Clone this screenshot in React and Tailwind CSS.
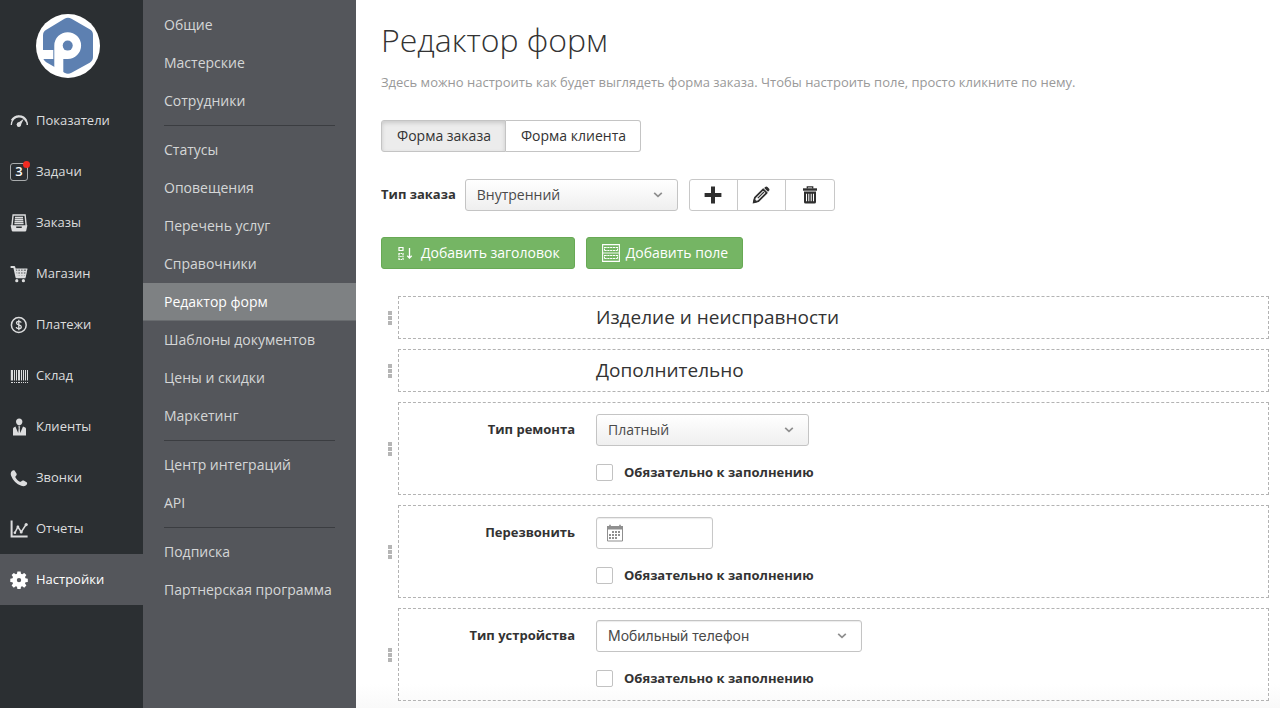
import React from "react";

const iconBox = "h-[18px] w-[18px] shrink-0";

function Gauge() {
  return (
    <svg viewBox="0 0 18 18" className={iconBox} fill="none" stroke="currentColor">
      <path d="M1.300 13C1.300 9 4 5 9 4.200" strokeWidth="1.300" />
      <path d="M1.800 8.500C3.400 5.600 6 4.300 9 4.300c3.600 0 6 1.800 7.300 4.700" strokeWidth="2.200" />
      <path d="M15.600 8c1.200 1.500 1.700 3.100 1.700 5" strokeWidth="1.500" />
      <path d="M13.800 6.800 10.800 13a2 2 0 1 1-3-1.900z" fill="currentColor" stroke="none" />
      <circle cx="8.900" cy="12.500" r="2.200" fill="currentColor" stroke="none" />
    </svg>
  );
}

function TaskCount() {
  return (
    <span className="relative flex h-[18px] w-[18px] shrink-0 items-center justify-center rounded-[3px] border border-[#a9acad] text-[13px] leading-none font-semibold text-white">
      3
      <span className="absolute -top-[3px] -right-[3px] h-[7px] w-[7px] rounded-full bg-[#f12b21]" />
    </span>
  );
}

function Tray() {
  return (
    <svg viewBox="0 0 18 18" className={iconBox} fill="none" stroke="currentColor">
      <path d="M1.900 12 3.100 1h12L16.200 12" strokeWidth="1.400" />
      <path d="M5 3.500h8M4.800 5.500h8.400M4.600 7.500h8.800M4.400 9.500h9.200" strokeWidth="1.300" />
      <path
        fill="currentColor"
        stroke="none"
        fillRule="evenodd"
        d="M.6 11.200h16.800l-1.200 5.600q-.2.800-1 .8H2.800q-.800 0-1-.8zM6.200 12.600v.8q0 .7.800.700h4q.8 0 .8-.7v-.8z"
      />
    </svg>
  );
}

function Cart() {
  return (
    <svg viewBox="0 0 18 18" className={iconBox} fill="none" stroke="currentColor">
      <path d="M.6 1.900h3.600l2.300 10.300h9" strokeWidth="2" strokeLinejoin="round" />
      <path d="M4.400 4h13l-1.800 8H6.300z" fill="currentColor" fillOpacity=".45" stroke="none" />
      <path d="M4.400 4h13M5 6.700h11.600M5.600 9.300h10.600M7.800 4v7M10.500 4v7M13.200 4v7M16.800 4l-1.500 7.500" strokeWidth="1.200" />
      <path d="M6 11.300h9.700" strokeWidth="1.800" />
      <circle cx="6.800" cy="15.700" r="1.600" fill="currentColor" stroke="none" />
      <circle cx="13.400" cy="15.700" r="1.600" fill="currentColor" stroke="none" />
    </svg>
  );
}

function Coin() {
  return (
    <svg viewBox="0 0 18 18" className={iconBox} fill="none" stroke="currentColor">
      <circle cx="8.800" cy="9" r="7.400" strokeWidth="1.500" />
      <path
        d="M11.200 6.700C11 5.700 10 5.300 8.800 5.300c-1.300 0-2.300.5-2.300 1.700C6.500 9.600 11.300 8.200 11.300 10.900c0 1.200-1.100 1.800-2.500 1.800-1.300 0-2.400-.5-2.600-1.700M8.800 3.800v10.400"
        strokeWidth="1.300"
      />
    </svg>
  );
}

function Barcode() {
  return (
    <svg viewBox="0 0 18 18" className={iconBox} fill="currentColor">
      <path d="M.8 3h2.200v10.500H.8zM4 3h1v10.500H4zM6 3h1v10.500H6zM8 3h2v10.500H8zM11 3h1v10.500h-1zM13 3h1v10.500h-1zM15 3h1v10.500h-1zM17 3h1v10.500h-1z" />
      <path d="M1 15h2v1H1zM4 15h1v1H4zM6 15h1v1H6zM8 15h2v1H8zM11 15h1v1h-1zM13 15h1v1h-1zM15 15h1v1h-1zM17 15h1v1h-1z" />
    </svg>
  );
}

function Client() {
  return (
    <svg viewBox="0 0 18 18" className={iconBox} fill="currentColor">
      <path d="M9.200.6c2 0 3.200 1.400 3.200 3.200S11 7.400 9.200 7.400 6 5.600 6 3.800 7.200.6 9.200.6z" />
      <path d="M5.400 8.600 8.200 15l.5-5L8.200 8.200h2L9.700 10l.5 5L13 8.600l2.200.9q.8.400.800 1.500v6.500H3V11q0-1.100.8-1.500z" />
    </svg>
  );
}

function Phone() {
  return (
    <svg viewBox="0 0 18 18" className={iconBox} fill="currentColor">
      <path d="M1.700 2.300C2.700 1.100 4.100.9 4.700 1.700l1.800 2.900c.5.900.2 1.700-.5 2.300-.7.500-.8.900-.5 1.500 1 1.900 2.500 3.400 4.400 4.300.6.300 1 .1 1.500-.5.600-.8 1.400-1 2.300-.6l2.900 1.700c.9.600.7 2-.5 2.900-1.400 1.100-3.100 1.200-4.900.6C6.500 15.200 3 11.600 1.200 7 .5 5.300.6 3.600 1.700 2.300z" />
    </svg>
  );
}

function Report() {
  return (
    <svg viewBox="0 0 18 18" className={iconBox} fill="none" stroke="currentColor">
      <path d="M1.600.6v15.800h16" strokeWidth="2" />
      <path d="M4.800 12.800 7.900 7l3.400 5 4.800-7.500" strokeWidth="1.500" />
      <g fill="currentColor" stroke="none">
        <circle cx="4.900" cy="12.700" r="1.300" />
        <circle cx="7.900" cy="6.900" r="1.400" />
        <circle cx="11.200" cy="12" r="1.500" />
        <circle cx="16.200" cy="4.600" r="1.600" />
      </g>
    </svg>
  );
}

function Gear() {
  return (
    <svg viewBox="0 0 18 18" className={iconBox} fill="currentColor">
      <path
        fillRule="evenodd"
        d="M7.400.5h3.200l.4 2.300 1.200.5 2-1.400 2.200 2.200-1.400 2 .5 1.200 2.300.4v3.200l-2.300.4-.5 1.200 1.400 2-2.200 2.200-2-1.400-1.200.5-.4 2.300H7.400L7 15.800l-1.200-.5-2 1.400-2.200-2.200 1.400-2-.5-1.200-2.200-.4V7.700l2.200-.4.5-1.200-1.400-2 2.200-2.200 2 1.400L7 2.800zM9 6.900a2.200 2.200 0 1 0 0 4.400 2.200 2.200 0 0 0 0-4.400z"
      />
    </svg>
  );
}

const sections = [
  ["Показатели", Gauge],
  ["Задачи", TaskCount],
  ["Заказы", Tray],
  ["Магазин", Cart],
  ["Платежи", Coin],
  ["Склад", Barcode],
  ["Клиенты", Client],
  ["Звонки", Phone],
  ["Отчеты", Report],
  ["Настройки", Gear],
];

const settings = [
  ["Общие", "Мастерские", "Сотрудники"],
  [
    "Статусы",
    "Оповещения",
    "Перечень услуг",
    "Справочники",
    "Редактор форм",
    "Шаблоны документов",
    "Цены и скидки",
    "Маркетинг",
  ],
  ["Центр интеграций", "API"],
  ["Подписка", "Партнерская программа"],
];

function Logo() {
  return (
    <svg viewBox="0 0 64 64" className="h-16 w-16" role="img" aria-label="Логотип">
      <circle cx="32" cy="32" r="32" fill="#fff" />
      <path
        fill="#5d80b1"
        d="M28.500 4.800q3.500-2 7 0l18.200 10.500q3.300 1.900 3.300 5.600v22.200q0 3.700-3.300 5.600L35.500 58.700q-3.500 2-7 0L10.300 48.200Q7 46.300 7 42.600V21.400q0-3.700 3.300-5.600z"
      />
      <path fill="#fff" d="M5 36h12.300v9H5z" />
      <path fill="#fff" d="M18.300 31.600a13.400 13.400 0 1 1 13.400 13.400h-4.400v14.500l-9-5z" />
      <circle cx="31.700" cy="31.600" r="5" fill="#5d80b1" />
    </svg>
  );
}

function Sidebar() {
  return (
    <nav className="flex w-[143px] shrink-0 flex-col bg-[#2b2f32]">
      <a href="#home" className="flex justify-center pt-3.5 pr-[7px] pb-[17px]">
        <Logo />
      </a>
      {sections.map(([label, Icon]) => (
        <a
          key={label}
          href="#section"
          className={
            label === "Настройки"
              ? "flex h-[51px] items-center gap-2 bg-[#54565b] pl-2.5 text-[13px] text-white"
              : "flex h-[51px] items-center gap-2 pl-2.5 text-[13px] text-[#dcddde]"
          }
        >
          <Icon />
          {label}
        </a>
      ))}
    </nav>
  );
}

function SettingsMenu() {
  return (
    <nav className="flex w-[213px] shrink-0 flex-col bg-[#54565b] pt-1.5 text-sm">
      {settings.map((group, i) => (
        <React.Fragment key={group[0]}>
          {i > 0 && <hr className="mx-[21px] my-[5px] border-[#3b3d41]" />}
          {group.map((label) => (
            <a
              key={label}
              href="#settings"
              className={
                label === "Редактор форм"
                  ? "flex h-[38px] items-center border-b border-[#696c6f] bg-[#7e8183] pl-[21px] text-white"
                  : "flex h-[38px] items-center pl-[21px] text-[#d5d6d7]"
              }
            >
              {label}
            </a>
          ))}
        </React.Fragment>
      ))}
    </nav>
  );
}

function Select({ id, value, width, plain }) {
  return (
    <div className={`relative ${width}`}>
      <select
        id={id}
        defaultValue={value}
        className={
          plain
            ? "h-8 w-full appearance-none rounded-[3px] border border-[#c4c4c4] bg-white pl-[11px] font-['Inter','Noto_Sans',sans-serif] text-sm text-[#4a4a4a] shadow-[inset_0_1px_1px_#00000014]"
            : "h-8 w-full appearance-none rounded-[3px] border border-[#c4c4c4] bg-linear-to-b from-white to-[#efefef] pl-[11px] text-sm text-[#4a4a4a]"
        }
      >
        <option>{value}</option>
      </select>
      <svg
        viewBox="0 0 10 6"
        className="pointer-events-none absolute top-[13px] right-[15px] h-[6px] w-[10px]"
        fill="none"
        stroke="#8f8f8f"
        strokeWidth="1.700"
      >
        <path d="M1.200.8 5 4.400 8.800.8" />
      </svg>
    </div>
  );
}

function Handle() {
  return (
    <span className="flex w-[17px] shrink-0 flex-col gap-px pl-[7px]" aria-hidden="true">
      <span className="h-[4px] w-[4px] bg-[#b5b5b5]" />
      <span className="h-[4px] w-[4px] bg-[#b5b5b5]" />
      <span className="h-[4px] w-[4px] bg-[#b5b5b5]" />
    </span>
  );
}

const dashed = "grow border border-dashed border-[#b3b3b3]";

function HeadingRow({ title }) {
  return (
    <li className="flex items-center">
      <Handle />
      <h2 className={`${dashed} flex h-[43px] items-center pl-[197px] text-[19px] text-[#333]`}>{title}</h2>
    </li>
  );
}

function FieldRow({ id, label, children }) {
  return (
    <li className="flex items-center">
      <Handle />
      <div className={`${dashed} flex h-[93px] gap-[21px] pt-[11px]`}>
        <label htmlFor={id} className="w-[176px] pt-[5px] text-right text-[13px] leading-5 font-bold text-[#333]">
          {label}
        </label>
        <div>
          {children}
          <label className="mt-4 flex items-center gap-[11px] text-[13px] leading-5 font-bold text-[#333]">
            <input
              type="checkbox"
              className="h-[17px] w-[17px] appearance-none rounded-xs border border-[#c2c2c2] bg-white"
            />
            Обязательно к заполнению
          </label>
        </div>
      </div>
    </li>
  );
}

function Toolbar() {
  const base = "flex h-8 w-12 items-center justify-center";
  return (
    <div className="ml-[11px] flex divide-x divide-[#c8c8c8] rounded-[3px] border border-[#c8c8c8] text-[#2f2f2f]">
      <button type="button" aria-label="Добавить тип" className={`${base} -my-px`}>
        <svg viewBox="0 0 18 18" className={iconBox} fill="currentColor">
          <path d="M7 .6h4V7h6.400v4H11v6.400H7V11H.6V7H7z" />
        </svg>
      </button>
      <button type="button" aria-label="Изменить тип" className={`${base} -my-px`}>
        <svg viewBox="0 0 18 18" className={iconBox} fill="none" stroke="currentColor">
          <path d="M2.900 11.600 11.200 3.300l3.500 3.500-8.300 8.300-4.600 1.200z" strokeWidth="1.800" strokeLinejoin="round" />
          <path d="M5.800 12.200 12 6" strokeWidth="1.200" />
          <path
            fill="currentColor"
            stroke="none"
            d="M.6 17.400 2 12.600l3.400 3.400zM12.200 2l1-1q1.200-1 2.300.1l1.400 1.400q1.100 1.100.1 2.300l-1 1z"
          />
        </svg>
      </button>
      <button type="button" aria-label="Удалить тип" className={`${base} -my-px`}>
        <svg viewBox="0 0 18 18" className={iconBox} fill="none" stroke="currentColor">
          <path d="M6.300 2.600V.8h5.400v1.800" strokeWidth="1.300" />
          <path d="M2 3.500h14" strokeWidth="2.400" />
          <path
            fill="currentColor"
            stroke="none"
            fillRule="evenodd"
            d="M3 5.600h12v10.300q0 1.600-1.600 1.600H4.600Q3 17.500 3 15.900zM5 7.800v7.400h1V7.800zm2.300 0v7.400h1V7.800zm2.400 0v7.400h1V7.800zm2.300 0v7.400h1V7.800z"
          />
        </svg>
      </button>
    </div>
  );
}

const green =
  "flex h-8 items-center rounded-[3px] border border-[#68a955] bg-[#75b564] pr-3.5 pl-[15px] text-sm text-white";

export default function App() {
  return (
    <div className="flex min-h-screen bg-white font-['Open_Sans','Noto_Sans',sans-serif]">
      <Sidebar />
      <SettingsMenu />
      <main className="min-w-0 grow bg-linear-to-t from-[#f9f9f9] to-white to-[24px] pt-4 pr-[11px] pl-[25px]">
        <h1 className="text-[32px] leading-12 font-light text-[#333]">Редактор форм</h1>
        <p className="mt-2 text-[13px] leading-5 text-[#999]">
          Здесь можно настроить как будет выглядеть форма заказа. Чтобы настроить поле, просто кликните по нему.
        </p>

        <div className="mt-7 flex text-sm text-[#333]">
          <button
            type="button"
            className="h-8 rounded-l-[3px] border border-[#c4c4c4] bg-[#ececec] pr-3.5 pl-[15px] shadow-[inset_0_2px_4px_#00000026]"
          >
            Форма заказа
          </button>
          <button
            type="button"
            className="h-8 rounded-r-[3px] border border-l-0 border-[#c4c4c4] bg-white pr-3.5 pl-[15px]"
          >
            Форма клиента
          </button>
        </div>

        <div className="mt-[27px] flex items-center">
          <label htmlFor="order-type" className="mr-[9px] text-[13px] font-bold text-[#333]">
            Тип заказа
          </label>
          <Select id="order-type" value="Внутренний" width="w-[213px]" />
          <Toolbar />
        </div>

        <div className="mt-[26px] flex gap-[11px]">
          <button type="button" className={green}>
            <svg viewBox="0 0 18 18" className="mr-1.5 h-[18px] w-[18px]" fill="none" stroke="currentColor">
              <path d="M2 3.500h4v3H2z" strokeWidth="1.200" />
              <path d="M1.400 9.500h5.200M2 9.500v6M6 9.500v6M1.400 15.500h5.200M3.200 12.500h1.600" strokeWidth="1.200" strokeDasharray="1.500 .6" />
              <path d="M12.500 4v10M10.300 11.700l2.200 2.400 2.200-2.400" strokeWidth="1.300" />
            </svg>
            Добавить заголовок
          </button>
          <button type="button" className={green}>
            <svg viewBox="0 0 18 18" className="mr-1.5 h-[18px] w-[18px]" fill="none" stroke="currentColor">
              <path d="M.6.6h16.800v16.800H.6z" strokeWidth="1.100" />
              <path d="M2.500 3.500h13M2.500 6.500h13M2.500 11.500h13M2.500 14.500h13" strokeWidth="1.100" strokeDasharray="2.200 .6" />
              <path d="M2.500 3v4M15.500 3v4M2.500 11v4M15.500 11v4" strokeWidth="1" strokeDasharray="1.400 .6" />
              <path d="M1 9h16" strokeWidth=".9" />
            </svg>
            Добавить поле
          </button>
        </div>

        <ul className="mt-[27px] flex flex-col gap-2.5">
          <HeadingRow title="Изделие и неисправности" />
          <HeadingRow title="Дополнительно" />
          <FieldRow id="repair-type" label="Тип ремонта">
            <Select id="repair-type" value="Платный" width="w-[213px]" />
          </FieldRow>
          <FieldRow id="call-back" label="Перезвонить">
            <div className="flex h-8 w-[117px] items-center rounded-[3px] border border-[#c8c8c8] bg-white pl-[9px] shadow-[inset_0_1px_1px_#00000014]">
              <svg viewBox="0 0 18 18" className={iconBox} fill="none" stroke="#8f8f8f">
                <path d="M1.500 2.500h15v14.500h-15z" strokeWidth="1" />
                <path d="M1 2h16v3.500H1z" fill="#8f8f8f" stroke="none" />
                <path d="M4 .7v2M14 .7v2" strokeWidth="1.600" />
                <path d="M6 8h9M3 11h12M3 14h9" strokeWidth="2" strokeDasharray="2 1" />
              </svg>
              <input id="call-back" type="text" className="ml-1 w-full min-w-0 text-sm outline-none" />
            </div>
          </FieldRow>
          <FieldRow id="device-type" label="Тип устройства">
            <Select id="device-type" value="Мобильный телефон" width="w-[266px]" plain />
          </FieldRow>
        </ul>
      </main>
    </div>
  );
}
